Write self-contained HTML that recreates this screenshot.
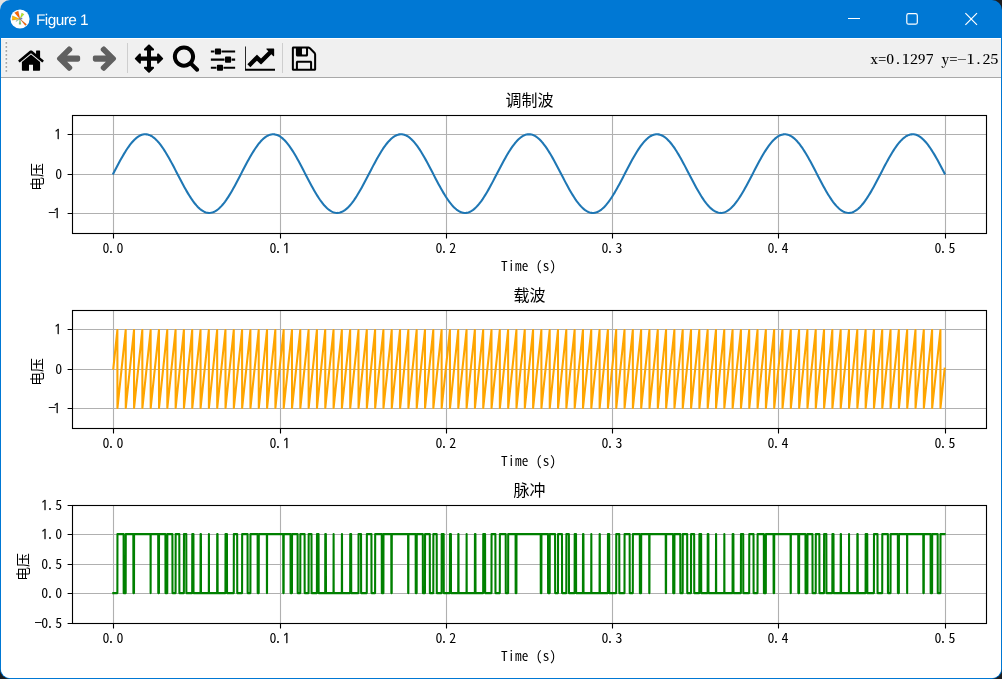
<!DOCTYPE html>
<html lang="zh-CN"><head><meta charset="utf-8"><title>Figure 1</title>
<style>
html,body{margin:0;padding:0;background:#1d1d1f;}
body{width:1002px;height:679px;overflow:hidden;position:relative;font-family:"Liberation Sans","Noto Sans CJK SC",sans-serif;}
#win{will-change:transform;position:absolute;left:0;top:0;width:1002px;height:679px;background:#0078d4;border-radius:10px;overflow:hidden;}
#cornertl{position:absolute;left:0;top:0;width:12px;height:12px;background:#e2e2e2;}
#title{font-family:"Liberation Sans",sans-serif;font-size:15.4px;letter-spacing:-.55px;text-rendering:geometricPrecision;fill:#fff;}
.logo{position:absolute;left:9px;top:8px;}
#ctl{position:absolute;left:0;top:0;}
#tbar{position:absolute;left:1px;top:38px;width:1000px;height:39px;background:#f0f0f0;border-bottom:1px solid #a9a9a9;box-shadow:inset 0 1px 0 #fff;}
.ic{position:absolute;overflow:hidden;}
#tbar .ic{margin-left:-1px;margin-top:-38px;}
.sep{position:absolute;top:5px;width:1px;height:30px;background:#cecece;}
#handle{position:absolute;left:-1px;top:0;}
#coordsvg{position:absolute;left:840px;top:0;}
#coord{font-family:"Noto Serif CJK SC","Liberation Serif",serif;font-feature-settings:"hwid";font-size:13.3px;font-weight:500;fill:#000;}
#canvas{position:absolute;left:1px;top:78px;width:1000px;height:600px;background:#fff;border-radius:0 0 9px 9px;overflow:hidden;}
.plot{position:absolute;left:0;top:0;display:block;}
.tk{font-family:"Noto Sans CJK SC","Liberation Sans",sans-serif;font-feature-settings:"hwid";font-size:13.9px;fill:#000;}
.xl{font-size:13.2px;letter-spacing:.34px;}
.o{font-family:"NanumGothic","Liberation Sans",sans-serif;font-feature-settings:normal;font-size:13.5px;text-rendering:geometricPrecision;stroke:#000;stroke-width:.32px;}
.tt{font-family:"Liberation Sans","Noto Sans CJK SC",sans-serif;font-size:16.0px;fill:#000;}
</style></head>
<body>
<div id="cornertl"></div>
<div id="win">
<svg class="logo" width="22" height="22" viewBox="-11 -11 22 22">
<circle r="9.6" fill="#fff"/>
<g stroke="#3a2a10" stroke-opacity=".45" stroke-width=".35" stroke-linejoin="round">
<polygon points="0,0 -5.4,-6.3 -1.8,-8.1" fill="#ff6200"/>
<polygon points="0,0 -7.6,-3.2 -7.8,1.2" fill="#ffb700"/>
<polygon points="0,0 1.7,-5.9 4,-4.7" fill="#b4f01e"/>
<polygon points="0,0 5.3,6.6 6.6,5.3" fill="#ff6200"/>
<polygon points="0,0 -1,5.3 0.9,5.3" fill="#5fe05f"/>
<polygon points="0,0 -4.1,2.7 -3.3,1.2" fill="#7fe8d8"/>
<polygon points="0,0 2.1,-1.1 2.1,0.2" fill="#4060ff"/>
</g>
</svg>
<svg id="ctl" width="1002" height="38" viewBox="0 0 1002 38">
<text id="title" x="36" y="24.95">Figure 1</text>
<g fill="none" stroke="#fff" stroke-width="1.2">
<path d="M848 18.5H860"/>
<rect x="906.8" y="13.7" width="10.5" height="10.5" rx="1.8"/>
<path d="M965.4 13.2L977 24.8M977 13.2L965.4 24.8"/>
</g>
</svg>
<div id="tbar">
<svg id="handle" width="10" height="36" viewBox="0 38 10 36"><g fill="#fff" opacity=".9"><rect x="4.6" y="41.5" width="2.4" height="2.4"/><rect x="4.6" y="45.5" width="2.4" height="2.4"/><rect x="4.6" y="49.5" width="2.4" height="2.4"/><rect x="4.6" y="53.5" width="2.4" height="2.4"/><rect x="4.6" y="57.5" width="2.4" height="2.4"/><rect x="4.6" y="61.5" width="2.4" height="2.4"/><rect x="4.6" y="65.5" width="2.4" height="2.4"/><rect x="4.6" y="69.5" width="2.4" height="2.4"/></g><g fill="#9a9a9a"><circle cx="6.3" cy="42.9" r="0.95"/><circle cx="6.3" cy="46.9" r="0.95"/><circle cx="6.3" cy="50.9" r="0.95"/><circle cx="6.3" cy="54.9" r="0.95"/><circle cx="6.3" cy="58.9" r="0.95"/><circle cx="6.3" cy="62.9" r="0.95"/><circle cx="6.3" cy="66.9" r="0.95"/><circle cx="6.3" cy="70.9" r="0.95"/></g></svg>
<svg class="ic" style="left:15.5px;top:43px" width="30" height="30" viewBox="0 0 72 72"><path d="M 57.86 45.94 C 57.86 45.87 57.86 45.79 57.82 45.72 L 35.99 27.73 L 14.18 45.72 C 14.18 45.79 14.14 45.87 14.14 45.94 L 14.14 64.15 C 14.14 65.48 15.24 66.58 16.57 66.58 L 31.14 66.58 L 31.14 52.02 L 40.86 52.02 L 40.86 66.58 L 55.43 66.58 C 56.76 66.58 57.86 65.48 57.86 64.15 z M 66.32 43.33 C 66.73 42.83 66.66 42.03 66.17 41.62 L 57.86 34.71 L 57.86 19.23 C 57.86 18.55 57.33 18.02 56.64 18.02 L 49.36 18.02 C 48.67 18.02 48.14 18.55 48.14 19.23 L 48.14 26.62 L 38.88 18.89 C 37.29 17.56 34.71 17.56 33.12 18.89 L 5.83 41.62 C 5.34 42.03 5.27 42.83 5.68 43.33 L 8.03 46.13 C 8.22 46.35 8.53 46.51 8.83 46.55 C 9.17 46.59 9.47 46.47 9.74 46.28 L 35.99 24.39 L 62.26 46.28 C 62.48 46.47 62.75 46.55 63.06 46.55 C 63.09 46.55 63.13 46.55 63.17 46.55 C 63.47 46.51 63.78 46.35 63.97 46.13 z" fill="#000"/></svg>
<svg class="ic" style="left:53px;top:43px" width="30" height="30" viewBox="0 0 72 72"><path d="M 65.14 35.01 C 65.14 32.42 63.43 30.15 60.7 30.15 L 33.99 30.15 L 45.11 19.04 C 46.02 18.12 46.55 16.87 46.55 15.58 C 46.55 14.29 46.02 13.03 45.11 12.13 L 42.26 9.32 C 41.34 8.41 40.13 7.88 38.85 7.88 C 37.55 7.88 36.3 8.41 35.39 9.32 L 10.69 33.99 C 9.82 34.9 9.29 36.14 9.29 37.44 C 9.29 38.73 9.82 39.98 10.69 40.85 L 35.39 65.6 C 36.3 66.47 37.55 67 38.85 67 C 40.13 67 41.39 66.47 42.26 65.6 L 45.11 62.71 C 46.02 61.84 46.55 60.58 46.55 59.3 C 46.55 58.01 46.02 56.76 45.11 55.88 L 33.99 44.73 L 60.7 44.73 C 63.43 44.73 65.14 42.44 65.14 39.86 z" fill="#606060"/></svg>
<svg class="ic" style="left:90px;top:43px" width="30" height="30" viewBox="0 0 72 72"><path d="M 62.71 37.44 C 62.71 36.14 62.22 34.9 61.31 34.02 L 36.61 9.32 C 35.69 8.41 34.44 7.88 33.15 7.88 C 31.87 7.88 30.64 8.41 29.74 9.32 L 26.89 12.16 C 25.98 13.03 25.45 14.29 25.45 15.58 C 25.45 16.87 25.98 18.12 26.89 19 L 38.01 30.15 L 11.3 30.15 C 8.57 30.15 6.86 32.42 6.86 35.01 L 6.86 39.86 C 6.86 42.44 8.57 44.73 11.3 44.73 L 38.01 44.73 L 26.89 55.84 C 25.98 56.76 25.45 58.01 25.45 59.3 C 25.45 60.58 25.98 61.84 26.89 62.75 L 29.74 65.6 C 30.64 66.47 31.87 67 33.15 67 C 34.44 67 35.69 66.47 36.61 65.6 L 61.31 40.89 C 62.22 39.98 62.71 38.73 62.71 37.44" fill="#606060"/></svg>
<svg class="ic" style="left:134px;top:43px" width="30" height="30" viewBox="0 0 72 72"><path d="M 70 37.44 C 70 36.8 69.73 36.19 69.28 35.74 L 59.57 26.02 C 59.11 25.56 58.5 25.3 57.86 25.3 C 56.53 25.3 55.43 26.4 55.43 27.73 L 55.43 32.58 L 40.86 32.58 L 40.86 18.02 L 45.71 18.02 C 47.04 18.02 48.14 16.91 48.14 15.58 C 48.14 14.94 47.88 14.33 47.42 13.87 L 37.71 4.16 C 37.25 3.71 36.65 3.44 36 3.44 C 35.35 3.44 34.75 3.71 34.29 4.16 L 24.58 13.87 C 24.12 14.33 23.86 14.94 23.86 15.58 C 23.86 16.91 24.96 18.02 26.29 18.02 L 31.14 18.02 L 31.14 32.58 L 16.57 32.58 L 16.57 27.73 C 16.57 26.4 15.47 25.3 14.14 25.3 C 13.5 25.3 12.89 25.56 12.43 26.02 L 2.72 35.74 C 2.27 36.19 2 36.8 2 37.44 C 2 38.09 2.27 38.69 2.72 39.15 L 12.43 48.86 C 12.89 49.32 13.5 49.58 14.14 49.58 C 15.47 49.58 16.57 48.49 16.57 47.16 L 16.57 42.3 L 31.14 42.3 L 31.14 56.87 L 26.29 56.87 C 24.96 56.87 23.86 57.97 23.86 59.3 C 23.86 59.94 24.12 60.55 24.58 61.01 L 34.29 70.72 C 34.75 71.17 35.35 71.44 36 71.44 C 36.65 71.44 37.25 71.17 37.71 70.72 L 47.42 61.01 C 47.88 60.55 48.14 59.94 48.14 59.3 C 48.14 57.97 47.04 56.87 45.71 56.87 L 40.86 56.87 L 40.86 42.3 L 55.43 42.3 L 55.43 47.16 C 55.43 48.49 56.53 49.58 57.86 49.58 C 58.5 49.58 59.11 49.32 59.57 48.86 L 69.28 39.15 C 69.73 38.69 70 38.09 70 37.44" fill="#000"/></svg>
<svg class="ic" style="left:171px;top:43px" width="30" height="30" viewBox="0 0 72 72"><path d="M 48.14 32.59 C 48.14 41.96 40.51 49.59 31.14 49.59 C 21.77 49.59 14.14 41.96 14.14 32.59 C 14.14 23.22 21.77 15.59 31.14 15.59 C 40.51 15.59 48.14 23.22 48.14 32.59 M 67.57 64.16 C 67.57 62.87 67.04 61.62 66.17 60.75 L 53.15 47.73 C 56.22 43.29 57.86 37.98 57.86 32.59 C 57.86 17.82 45.91 5.87 31.14 5.87 C 16.38 5.87 4.43 17.82 4.43 32.59 C 4.43 47.35 16.38 59.3 31.14 59.3 C 36.53 59.3 41.84 57.66 46.28 54.59 L 59.3 67.58 C 60.17 68.48 61.42 69.01 62.72 69.01 C 65.37 69.01 67.57 66.81 67.57 64.16" fill="#000"/></svg>
<svg class="ic" style="left:208px;top:43px" width="30" height="30" viewBox="0 0 72 72"><path d="M 20.21 56.87 L 6.86 56.87 L 6.86 61.73 L 20.21 61.73 z M 33.57 52.02 L 23.86 52.02 C 22.53 52.02 21.42 53.11 21.42 54.44 L 21.42 64.16 C 21.42 65.49 22.53 66.58 23.86 66.58 L 33.57 66.58 C 34.9 66.58 36 65.49 36 64.16 L 36 54.44 C 36 53.11 34.9 52.02 33.57 52.02 M 39.64 37.44 L 6.86 37.44 L 6.86 42.3 L 39.64 42.3 z M 15.36 18.02 L 6.86 18.02 L 6.86 22.87 L 15.36 22.87 z M 65.14 56.87 L 37.21 56.87 L 37.21 61.73 L 65.14 61.73 z M 28.71 13.16 L 19 13.16 C 17.67 13.16 16.57 14.26 16.57 15.58 L 16.57 25.3 C 16.57 26.62 17.67 27.73 19 27.73 L 28.71 27.73 C 30.04 27.73 31.14 26.62 31.14 25.3 L 31.14 15.58 C 31.14 14.26 30.04 13.16 28.71 13.16 M 53 32.58 L 43.29 32.58 C 41.96 32.58 40.86 33.69 40.86 35.02 L 40.86 44.73 C 40.86 46.06 41.96 47.16 43.29 47.16 L 53 47.16 C 54.33 47.16 55.42 46.06 55.42 44.73 L 55.42 35.02 C 55.42 33.69 54.33 32.58 53 32.58 M 65.14 37.44 L 56.64 37.44 L 56.64 42.3 L 65.14 42.3 z M 65.14 18.02 L 32.36 18.02 L 32.36 22.87 L 65.14 22.87 z" fill="#000"/></svg>
<svg class="ic" style="left:245px;top:43px" width="30" height="30" viewBox="0 0 72 72"><path d="M 74.86 61.73 L 2 61.73 L 2 8.3 L -2.86 8.3 L -2.86 66.58 L 74.86 66.58 z M 70 14.37 C 70 13.69 69.47 13.16 68.79 13.16 L 52.28 13.16 C 51.22 13.16 50.65 14.45 51.45 15.24 L 56.04 19.83 L 38.43 37.44 L 29.59 28.6 C 29.09 28.11 28.34 28.11 27.84 28.6 L 5.64 50.8 L 12.93 58.08 L 28.71 42.3 L 37.56 51.15 C 38.05 51.63 38.8 51.63 39.3 51.15 L 63.33 27.12 L 67.92 31.71 C 68.71 32.51 70 31.94 70 30.87 z" fill="#000"/></svg>
<svg class="ic" style="left:289px;top:43px" width="30" height="30" viewBox="0 0 72 72"><path d="M 21.42 61.73 L 21.42 47.16 L 50.57 47.16 L 50.57 61.73 z M 55.42 61.73 L 55.42 45.94 C 55.42 43.93 53.8 42.3 51.79 42.3 L 20.21 42.3 C 18.2 42.3 16.57 43.93 16.57 45.94 L 16.57 61.73 L 11.71 61.73 L 11.71 13.16 L 16.57 13.16 L 16.57 28.94 C 16.57 30.96 18.2 32.58 20.21 32.58 L 42.07 32.58 C 44.09 32.58 45.71 30.96 45.71 28.94 L 45.71 13.16 C 46.48 13.16 47.95 13.77 48.48 14.3 L 59.14 24.96 C 59.64 25.45 60.29 27.01 60.29 27.73 L 60.29 61.73 z M 40.86 26.52 C 40.86 27.16 40.28 27.73 39.64 27.73 L 32.36 27.73 C 31.71 27.73 31.14 27.16 31.14 26.52 L 31.14 14.37 C 31.14 13.72 31.71 13.16 32.36 13.16 L 39.64 13.16 C 40.28 13.16 40.86 13.72 40.86 14.37 z M 65.14 27.73 C 65.14 25.72 64.01 22.95 62.56 21.5 L 51.94 10.88 C 50.49 9.44 47.72 8.3 45.71 8.3 L 10.5 8.3 C 8.49 8.3 6.86 9.93 6.86 11.94 L 6.86 62.94 C 6.86 64.96 8.49 66.58 10.5 66.58 L 61.5 66.58 C 63.51 66.58 65.14 64.96 65.14 62.94 z" fill="#000"/></svg>
<div class="sep" style="left:126px"></div>
<div class="sep" style="left:281px"></div>
<svg id="coordsvg" width="160" height="39" viewBox="841 38 160 39"><text id="coord" transform="translate(998.3 63.55) scale(1.19 1)" text-anchor="end">x=0.1297 y=−1.25</text></svg>
</div>
<div id="canvas">
<svg class="plot" width="1000" height="600" viewBox="1 78 1000 600">
<rect x="1" y="78" width="1000" height="600" fill="#fff"/>
<g>
<path d="M113.5 115.5 V233.5 M280.5 115.5 V233.5 M446.5 115.5 V233.5 M612.5 115.5 V233.5 M778.5 115.5 V233.5 M945.5 115.5 V233.5 M72.5 134.5 H986.5 M72.5 174.5 H986.5 M72.5 213.5 H986.5" stroke="#b0b0b0" stroke-width="1.11" fill="none"/>
<clipPath id="c0"><rect x="72.5" y="115.5" width="914" height="118"/></clipPath>
<path clip-path="url(#c0)" d="M113.3 173.6 L114.49 171.31 L115.68 169.02 L116.86 166.75 L118.05 164.5 L119.24 162.29 L120.43 160.11 L121.61 157.98 L122.8 155.9 L123.99 153.88 L125.18 151.93 L126.36 150.06 L127.55 148.26 L128.74 146.55 L129.93 144.93 L131.11 143.41 L132.3 141.99 L133.49 140.68 L134.68 139.48 L135.87 138.4 L137.05 137.43 L138.24 136.6 L139.43 135.88 L140.62 135.3 L141.8 134.84 L142.99 134.52 L144.18 134.33 L145.37 134.27 L146.55 134.35 L147.74 134.56 L148.93 134.9 L150.12 135.38 L151.3 135.98 L152.49 136.72 L153.68 137.58 L154.87 138.56 L156.06 139.66 L157.24 140.87 L158.43 142.2 L159.62 143.64 L160.81 145.17 L161.99 146.81 L163.18 148.53 L164.37 150.34 L165.56 152.23 L166.74 154.19 L167.93 156.22 L169.12 158.3 L170.31 160.44 L171.49 162.63 L172.68 164.85 L173.87 167.1 L175.06 169.37 L176.25 171.66 L177.43 173.95 L178.62 176.25 L179.81 178.53 L181 180.8 L182.18 183.04 L183.37 185.25 L184.56 187.42 L185.75 189.54 L186.93 191.61 L188.12 193.62 L189.31 195.56 L190.5 197.43 L191.68 199.21 L192.87 200.91 L194.06 202.51 L195.25 204.02 L196.44 205.42 L197.62 206.71 L198.81 207.89 L200 208.96 L201.19 209.9 L202.37 210.72 L203.56 211.42 L204.75 211.98 L205.94 212.42 L207.12 212.72 L208.31 212.89 L209.5 212.93 L210.69 212.83 L211.87 212.6 L213.06 212.23 L214.25 211.74 L215.44 211.11 L216.62 210.36 L217.81 209.48 L219 208.48 L220.19 207.36 L221.38 206.13 L222.56 204.78 L223.75 203.33 L224.94 201.78 L226.13 200.13 L227.31 198.4 L228.5 196.57 L229.69 194.67 L230.88 192.7 L232.06 190.66 L233.25 188.57 L234.44 186.42 L235.63 184.23 L236.81 182.01 L238 179.75 L239.19 177.48 L240.38 175.19 L241.57 172.89 L242.75 170.6 L243.94 168.32 L245.13 166.06 L246.32 163.82 L247.5 161.61 L248.69 159.45 L249.88 157.33 L251.07 155.27 L252.25 153.28 L253.44 151.35 L254.63 149.49 L255.82 147.72 L257 146.04 L258.19 144.45 L259.38 142.96 L260.57 141.58 L261.76 140.3 L262.94 139.13 L264.13 138.09 L265.32 137.16 L266.51 136.36 L267.69 135.69 L268.88 135.14 L270.07 134.73 L271.26 134.44 L272.44 134.3 L273.63 134.28 L274.82 134.4 L276.01 134.65 L277.19 135.03 L278.38 135.55 L279.57 136.19 L280.76 136.97 L281.95 137.86 L283.13 138.88 L284.32 140.02 L285.51 141.27 L286.7 142.63 L287.88 144.1 L289.07 145.66 L290.26 147.33 L291.45 149.08 L292.63 150.91 L293.82 152.82 L295.01 154.81 L296.2 156.85 L297.38 158.96 L298.57 161.11 L299.76 163.31 L300.95 165.54 L302.14 167.8 L303.32 170.07 L304.51 172.36 L305.7 174.66 L306.89 176.95 L308.07 179.23 L309.26 181.49 L310.45 183.72 L311.64 185.92 L312.82 188.08 L314.01 190.19 L315.2 192.24 L316.39 194.23 L317.57 196.14 L318.76 197.98 L319.95 199.74 L321.14 201.41 L322.33 202.98 L323.51 204.46 L324.7 205.83 L325.89 207.09 L327.08 208.23 L328.26 209.26 L329.45 210.17 L330.64 210.95 L331.83 211.61 L333.01 212.13 L334.2 212.53 L335.39 212.79 L336.58 212.92 L337.76 212.91 L338.95 212.77 L340.14 212.5 L341.33 212.09 L342.52 211.56 L343.7 210.89 L344.89 210.1 L346.08 209.19 L347.27 208.15 L348.45 207 L349.64 205.73 L350.83 204.35 L352.02 202.87 L353.2 201.29 L354.39 199.61 L355.58 197.84 L356.77 196 L357.95 194.07 L359.14 192.08 L360.33 190.03 L361.52 187.91 L362.7 185.75 L363.89 183.55 L365.08 181.32 L366.27 179.05 L367.46 176.77 L368.64 174.48 L369.83 172.19 L371.02 169.9 L372.21 167.62 L373.39 165.37 L374.58 163.14 L375.77 160.94 L376.96 158.79 L378.14 156.69 L379.33 154.65 L380.52 152.68 L381.71 150.77 L382.89 148.94 L384.08 147.2 L385.27 145.54 L386.46 143.98 L387.65 142.52 L388.83 141.17 L390.02 139.93 L391.21 138.8 L392.4 137.79 L393.58 136.9 L394.77 136.14 L395.96 135.51 L397.15 135 L398.33 134.63 L399.52 134.38 L400.71 134.28 L401.9 134.3 L403.08 134.46 L404.27 134.75 L405.46 135.18 L406.65 135.73 L407.84 136.42 L409.02 137.23 L410.21 138.16 L411.4 139.22 L412.59 140.39 L413.77 141.68 L414.96 143.07 L416.15 144.57 L417.34 146.17 L418.52 147.86 L419.71 149.63 L420.9 151.49 L422.09 153.43 L423.27 155.43 L424.46 157.5 L425.65 159.62 L426.84 161.78 L428.03 163.99 L429.21 166.23 L430.4 168.5 L431.59 170.78 L432.78 173.07 L433.96 175.36 L435.15 177.65 L436.34 179.93 L437.53 182.18 L438.71 184.4 L439.9 186.59 L441.09 188.73 L442.28 190.82 L443.46 192.86 L444.65 194.82 L445.84 196.72 L447.03 198.53 L448.22 200.26 L449.4 201.91 L450.59 203.45 L451.78 204.89 L452.97 206.23 L454.15 207.45 L455.34 208.56 L456.53 209.55 L457.72 210.42 L458.9 211.17 L460.09 211.78 L461.28 212.27 L462.47 212.62 L463.65 212.84 L464.84 212.93 L466.03 212.88 L467.22 212.7 L468.41 212.39 L469.59 211.94 L470.78 211.37 L471.97 210.66 L473.16 209.83 L474.34 208.88 L475.53 207.81 L476.72 206.62 L477.91 205.31 L479.09 203.9 L480.28 202.39 L481.47 200.78 L482.66 199.08 L483.84 197.29 L485.03 195.41 L486.22 193.47 L487.41 191.46 L488.6 189.38 L489.78 187.25 L490.97 185.08 L492.16 182.87 L493.35 180.62 L494.53 178.35 L495.72 176.07 L496.91 173.78 L498.1 171.48 L499.28 169.2 L500.47 166.92 L501.66 164.68 L502.85 162.46 L504.03 160.28 L505.22 158.14 L506.41 156.06 L507.6 154.04 L508.79 152.08 L509.97 150.2 L511.16 148.39 L512.35 146.68 L513.54 145.05 L514.72 143.52 L515.91 142.1 L517.1 140.78 L518.29 139.57 L519.47 138.48 L520.66 137.5 L521.85 136.66 L523.04 135.93 L524.22 135.34 L525.41 134.87 L526.6 134.54 L527.79 134.34 L528.98 134.27 L530.16 134.34 L531.35 134.54 L532.54 134.87 L533.73 135.34 L534.91 135.93 L536.1 136.66 L537.29 137.5 L538.48 138.48 L539.66 139.57 L540.85 140.78 L542.04 142.1 L543.23 143.52 L544.41 145.05 L545.6 146.68 L546.79 148.39 L547.98 150.2 L549.16 152.08 L550.35 154.04 L551.54 156.06 L552.73 158.14 L553.92 160.28 L555.1 162.46 L556.29 164.68 L557.48 166.92 L558.67 169.2 L559.85 171.48 L561.04 173.78 L562.23 176.07 L563.42 178.35 L564.6 180.62 L565.79 182.87 L566.98 185.08 L568.17 187.25 L569.35 189.38 L570.54 191.46 L571.73 193.47 L572.92 195.41 L574.11 197.29 L575.29 199.08 L576.48 200.78 L577.67 202.39 L578.86 203.9 L580.04 205.31 L581.23 206.62 L582.42 207.81 L583.61 208.88 L584.79 209.83 L585.98 210.66 L587.17 211.37 L588.36 211.94 L589.54 212.39 L590.73 212.7 L591.92 212.88 L593.11 212.93 L594.3 212.84 L595.48 212.62 L596.67 212.27 L597.86 211.78 L599.05 211.17 L600.23 210.42 L601.42 209.55 L602.61 208.56 L603.8 207.45 L604.98 206.23 L606.17 204.89 L607.36 203.45 L608.55 201.91 L609.73 200.26 L610.92 198.53 L612.11 196.72 L613.3 194.82 L614.49 192.86 L615.67 190.82 L616.86 188.73 L618.05 186.59 L619.24 184.4 L620.42 182.18 L621.61 179.93 L622.8 177.65 L623.99 175.36 L625.17 173.07 L626.36 170.78 L627.55 168.5 L628.74 166.23 L629.92 163.99 L631.11 161.78 L632.3 159.62 L633.49 157.5 L634.68 155.43 L635.86 153.43 L637.05 151.49 L638.24 149.63 L639.43 147.86 L640.61 146.17 L641.8 144.57 L642.99 143.07 L644.18 141.68 L645.36 140.39 L646.55 139.22 L647.74 138.16 L648.93 137.23 L650.11 136.42 L651.3 135.73 L652.49 135.18 L653.68 134.75 L654.87 134.46 L656.05 134.3 L657.24 134.28 L658.43 134.38 L659.62 134.63 L660.8 135 L661.99 135.51 L663.18 136.14 L664.37 136.9 L665.55 137.79 L666.74 138.8 L667.93 139.93 L669.12 141.17 L670.3 142.52 L671.49 143.98 L672.68 145.54 L673.87 147.2 L675.06 148.94 L676.24 150.77 L677.43 152.68 L678.62 154.65 L679.81 156.69 L680.99 158.79 L682.18 160.94 L683.37 163.14 L684.56 165.37 L685.74 167.62 L686.93 169.9 L688.12 172.19 L689.31 174.48 L690.49 176.77 L691.68 179.05 L692.87 181.32 L694.06 183.55 L695.24 185.75 L696.43 187.91 L697.62 190.03 L698.81 192.08 L700 194.07 L701.18 196 L702.37 197.84 L703.56 199.61 L704.75 201.29 L705.93 202.87 L707.12 204.35 L708.31 205.73 L709.5 207 L710.68 208.15 L711.87 209.19 L713.06 210.1 L714.25 210.89 L715.43 211.56 L716.62 212.09 L717.81 212.5 L719 212.77 L720.19 212.91 L721.37 212.92 L722.56 212.79 L723.75 212.53 L724.94 212.13 L726.12 211.61 L727.31 210.95 L728.5 210.17 L729.69 209.26 L730.87 208.23 L732.06 207.09 L733.25 205.83 L734.44 204.46 L735.62 202.98 L736.81 201.41 L738 199.74 L739.19 197.98 L740.38 196.14 L741.56 194.23 L742.75 192.24 L743.94 190.19 L745.13 188.08 L746.31 185.92 L747.5 183.72 L748.69 181.49 L749.88 179.23 L751.06 176.95 L752.25 174.66 L753.44 172.36 L754.63 170.07 L755.81 167.8 L757 165.54 L758.19 163.31 L759.38 161.11 L760.57 158.96 L761.75 156.85 L762.94 154.81 L764.13 152.82 L765.32 150.91 L766.5 149.08 L767.69 147.33 L768.88 145.66 L770.07 144.1 L771.25 142.63 L772.44 141.27 L773.63 140.02 L774.82 138.88 L776 137.86 L777.19 136.97 L778.38 136.19 L779.57 135.55 L780.76 135.03 L781.94 134.65 L783.13 134.4 L784.32 134.28 L785.51 134.3 L786.69 134.44 L787.88 134.73 L789.07 135.14 L790.26 135.69 L791.44 136.36 L792.63 137.16 L793.82 138.09 L795.01 139.13 L796.19 140.3 L797.38 141.58 L798.57 142.96 L799.76 144.45 L800.95 146.04 L802.13 147.72 L803.32 149.49 L804.51 151.35 L805.7 153.28 L806.88 155.27 L808.07 157.33 L809.26 159.45 L810.45 161.61 L811.63 163.82 L812.82 166.06 L814.01 168.32 L815.2 170.6 L816.38 172.89 L817.57 175.19 L818.76 177.48 L819.95 179.75 L821.14 182.01 L822.32 184.23 L823.51 186.42 L824.7 188.57 L825.89 190.66 L827.07 192.7 L828.26 194.67 L829.45 196.57 L830.64 198.4 L831.82 200.13 L833.01 201.78 L834.2 203.33 L835.39 204.78 L836.57 206.13 L837.76 207.36 L838.95 208.48 L840.14 209.48 L841.33 210.36 L842.51 211.11 L843.7 211.74 L844.89 212.23 L846.08 212.6 L847.26 212.83 L848.45 212.93 L849.64 212.89 L850.83 212.72 L852.01 212.42 L853.2 211.98 L854.39 211.42 L855.58 210.72 L856.76 209.9 L857.95 208.96 L859.14 207.89 L860.33 206.71 L861.51 205.42 L862.7 204.02 L863.89 202.51 L865.08 200.91 L866.27 199.21 L867.45 197.43 L868.64 195.56 L869.83 193.62 L871.02 191.61 L872.2 189.54 L873.39 187.42 L874.58 185.25 L875.77 183.04 L876.95 180.8 L878.14 178.53 L879.33 176.25 L880.52 173.95 L881.7 171.66 L882.89 169.37 L884.08 167.1 L885.27 164.85 L886.46 162.63 L887.64 160.44 L888.83 158.3 L890.02 156.22 L891.21 154.19 L892.39 152.23 L893.58 150.34 L894.77 148.53 L895.96 146.81 L897.14 145.17 L898.33 143.64 L899.52 142.2 L900.71 140.87 L901.89 139.66 L903.08 138.56 L904.27 137.58 L905.46 136.72 L906.65 135.98 L907.83 135.38 L909.02 134.9 L910.21 134.56 L911.4 134.35 L912.58 134.27 L913.77 134.33 L914.96 134.52 L916.15 134.84 L917.33 135.3 L918.52 135.88 L919.71 136.6 L920.9 137.43 L922.08 138.4 L923.27 139.48 L924.46 140.68 L925.65 141.99 L926.84 143.41 L928.02 144.93 L929.21 146.55 L930.4 148.26 L931.59 150.06 L932.77 151.93 L933.96 153.88 L935.15 155.9 L936.34 157.98 L937.52 160.11 L938.71 162.29 L939.9 164.5 L941.09 166.75 L942.27 169.02 L943.46 171.31 L944.65 173.6" stroke="#1f77b4" stroke-width="2.08" fill="none" stroke-linejoin="round" stroke-linecap="square"/>
<path d="M113.5 233.5 v4.9 M280.5 233.5 v4.9 M446.5 233.5 v4.9 M612.5 233.5 v4.9 M778.5 233.5 v4.9 M945.5 233.5 v4.9 M72.5 134.5 h-4.9 M72.5 174.5 h-4.9 M72.5 213.5 h-4.9" stroke="#000" stroke-width="1.11" fill="none"/>
<rect x="72.5" y="115.5" width="914" height="118" fill="none" stroke="#000" stroke-width="1.11"/>
<text class="tk" x="102.48 107.53 116.38" y="252.9">0.0</text>
<text class="tk" x="269.47 274.52 282.18" y="252.9">0.<tspan class="o">1</tspan></text>
<text class="tk" x="435.47 440.52 449.37" y="252.9">0.2</text>
<text class="tk" x="601.48 606.53 615.38" y="252.9">0.3</text>
<text class="tk" x="767.48 772.53 781.38" y="252.9">0.4</text>
<text class="tk" x="934.48 939.53 948.38" y="252.9">0.5</text>
<text class="tk" x="53.85" y="139.05"><tspan class="o">1</tspan></text>
<text class="tk" x="55.25" y="179.05">0</text>
<text class="tk" x="48.3 52.85" y="218.05">−<tspan class="o">1</tspan></text>
<text class="tk xl" x="528.8" y="270.8" text-anchor="middle">Time (s)</text>
<text class="tt" x="529.5" y="106" text-anchor="middle">调制波</text>
<text class="tk" transform="translate(42.4 176.9) rotate(-90)" text-anchor="middle">电压</text>
</g>
<g>
<path d="M113.5 310.5 V428.5 M280.5 310.5 V428.5 M446.5 310.5 V428.5 M612.5 310.5 V428.5 M778.5 310.5 V428.5 M945.5 310.5 V428.5 M72.5 329.5 H986.5 M72.5 369.5 H986.5 M72.5 408.5 H986.5" stroke="#b0b0b0" stroke-width="1.11" fill="none"/>
<clipPath id="c1"><rect x="72.5" y="310.5" width="914" height="118"/></clipPath>
<path clip-path="url(#c1)" d="M113.3 368.6 L117.37 330.06 L117.46 407.93 L125.69 330.06 L125.77 407.93 L134 330.06 L134.08 407.93 L142.31 330.06 L142.4 407.93 L150.63 330.06 L150.71 407.93 L158.94 330.06 L159.02 407.93 L167.25 330.06 L167.34 407.93 L175.57 330.06 L175.65 407.93 L183.88 330.06 L183.96 407.93 L192.2 330.06 L192.28 407.93 L200.51 330.06 L200.59 407.93 L208.82 330.06 L208.91 407.93 L217.14 330.06 L217.22 407.93 L225.45 330.06 L225.53 407.93 L233.76 330.06 L233.85 407.93 L242.08 330.06 L242.16 407.93 L250.39 330.06 L250.47 407.93 L258.7 330.06 L258.79 407.93 L267.02 330.06 L267.1 407.93 L275.33 330.06 L275.41 407.93 L283.64 330.06 L283.73 407.93 L291.96 330.06 L292.04 407.93 L300.27 330.06 L300.35 407.93 L308.58 330.06 L308.67 407.93 L316.9 330.06 L316.98 407.93 L325.21 330.06 L325.29 407.93 L333.52 330.06 L333.61 407.93 L341.84 330.06 L341.92 407.93 L350.15 330.06 L350.23 407.93 L358.47 330.06 L358.55 407.93 L366.78 330.06 L366.86 407.93 L375.09 330.06 L375.18 407.93 L383.41 330.06 L383.49 407.93 L391.72 330.06 L391.8 407.93 L400.03 330.06 L400.12 407.93 L408.35 330.06 L408.43 407.93 L416.66 330.06 L416.74 407.93 L424.97 330.06 L425.06 407.93 L433.29 330.06 L433.37 407.93 L441.6 330.06 L441.68 407.93 L449.91 330.06 L450 407.93 L458.23 330.06 L458.31 407.93 L466.54 330.06 L466.62 407.93 L474.85 330.06 L474.94 407.93 L483.17 330.06 L483.25 407.93 L491.48 330.06 L491.56 407.93 L499.79 330.06 L499.88 407.93 L508.11 330.06 L508.19 407.93 L516.42 330.06 L516.5 407.93 L524.74 330.06 L524.82 407.93 L533.05 330.06 L533.13 407.93 L541.36 330.06 L541.45 407.93 L549.68 330.06 L549.76 407.93 L557.99 330.06 L558.07 407.93 L566.3 330.06 L566.39 407.93 L574.62 330.06 L574.7 407.93 L582.93 330.06 L583.01 407.93 L591.24 330.06 L591.33 407.93 L599.56 330.06 L599.64 407.93 L607.87 330.06 L607.95 407.93 L616.18 330.06 L616.27 407.93 L624.5 330.06 L624.58 407.93 L632.81 330.06 L632.89 407.93 L641.12 330.06 L641.21 407.93 L649.44 330.06 L649.52 407.93 L657.75 330.06 L657.83 407.93 L666.06 330.06 L666.15 407.93 L674.38 330.06 L674.46 407.93 L682.69 330.06 L682.77 407.93 L691.01 330.06 L691.09 407.93 L699.32 330.06 L699.4 407.93 L707.63 330.06 L707.72 407.93 L715.95 330.06 L716.03 407.93 L724.26 330.06 L724.34 407.93 L732.57 330.06 L732.66 407.93 L740.89 330.06 L740.97 407.93 L749.2 330.06 L749.28 407.93 L757.51 330.06 L757.6 407.93 L765.83 330.06 L765.91 407.93 L774.14 330.06 L774.22 407.93 L782.45 330.06 L782.54 407.93 L790.77 330.06 L790.85 407.93 L799.08 330.06 L799.16 407.93 L807.39 330.06 L807.48 407.93 L815.71 330.06 L815.79 407.93 L824.02 330.06 L824.1 407.93 L832.33 330.06 L832.42 407.93 L840.65 330.06 L840.73 407.93 L848.96 330.06 L849.04 407.93 L857.28 330.06 L857.36 407.93 L865.59 330.06 L865.67 407.93 L873.9 330.06 L873.99 407.93 L882.22 330.06 L882.3 407.93 L890.53 330.06 L890.61 407.93 L898.84 330.06 L898.93 407.93 L907.16 330.06 L907.24 407.93 L915.47 330.06 L915.55 407.93 L923.78 330.06 L923.87 407.93 L932.1 330.06 L932.18 407.93 L940.41 330.06 L940.49 407.93 L944.65 368.6" stroke="#ffa500" stroke-width="2.08" fill="none" stroke-linejoin="round" stroke-linecap="square"/>
<path d="M113.5 428.5 v4.9 M280.5 428.5 v4.9 M446.5 428.5 v4.9 M612.5 428.5 v4.9 M778.5 428.5 v4.9 M945.5 428.5 v4.9 M72.5 329.5 h-4.9 M72.5 369.5 h-4.9 M72.5 408.5 h-4.9" stroke="#000" stroke-width="1.11" fill="none"/>
<rect x="72.5" y="310.5" width="914" height="118" fill="none" stroke="#000" stroke-width="1.11"/>
<text class="tk" x="102.48 107.53 116.38" y="447.9">0.0</text>
<text class="tk" x="269.47 274.52 282.18" y="447.9">0.<tspan class="o">1</tspan></text>
<text class="tk" x="435.47 440.52 449.37" y="447.9">0.2</text>
<text class="tk" x="601.48 606.53 615.38" y="447.9">0.3</text>
<text class="tk" x="767.48 772.53 781.38" y="447.9">0.4</text>
<text class="tk" x="934.48 939.53 948.38" y="447.9">0.5</text>
<text class="tk" x="53.85" y="334.05"><tspan class="o">1</tspan></text>
<text class="tk" x="55.25" y="374.05">0</text>
<text class="tk" x="48.3 52.85" y="413.05">−<tspan class="o">1</tspan></text>
<text class="tk xl" x="528.8" y="465.8" text-anchor="middle">Time (s)</text>
<text class="tt" x="529.5" y="301" text-anchor="middle">载波</text>
<text class="tk" transform="translate(42.4 371.9) rotate(-90)" text-anchor="middle">电压</text>
</g>
<g>
<path d="M113.5 505.5 V623.5 M280.5 505.5 V623.5 M446.5 505.5 V623.5 M612.5 505.5 V623.5 M778.5 505.5 V623.5 M945.5 505.5 V623.5 M72.5 534.5 H986.5 M72.5 564.5 H986.5 M72.5 593.5 H986.5" stroke="#b0b0b0" stroke-width="1.11" fill="none"/>
<clipPath id="c2"><rect x="72.5" y="505.5" width="914" height="118"/></clipPath>
<path clip-path="url(#c2)" d="M113.3 593.1 L117.37 593.1 L117.46 534.1 L123.61 534.1 L123.69 593.1 L125.69 593.1 L125.77 534.1 L133.34 534.1 L133.42 593.1 L134 593.1 L134.08 534.1 L150.54 534.1 L150.63 593.1 L150.63 593.1 L150.71 534.1 L158.19 534.1 L158.28 593.1 L158.94 593.1 L159.02 534.1 L165.43 534.1 L165.51 593.1 L167.25 593.1 L167.34 534.1 L172.41 534.1 L172.49 593.1 L175.57 593.1 L175.65 534.1 L179.31 534.1 L179.39 593.1 L183.88 593.1 L183.96 534.1 L186.29 534.1 L186.38 593.1 L192.2 593.1 L192.28 534.1 L193.44 534.1 L193.53 593.1 L200.51 593.1 L200.59 534.1 L200.92 534.1 L201.01 593.1 L208.82 593.1 L208.91 534.1 L208.91 534.1 L208.99 593.1 L217.14 593.1 L217.22 534.1 L217.55 534.1 L217.63 593.1 L225.45 593.1 L225.53 534.1 L226.95 534.1 L227.03 593.1 L233.76 593.1 L233.85 534.1 L237.17 534.1 L237.25 593.1 L242.08 593.1 L242.16 534.1 L247.56 534.1 L247.65 593.1 L250.39 593.1 L250.47 534.1 L257.62 534.1 L257.71 593.1 L258.7 593.1 L258.79 534.1 L266.85 534.1 L266.93 593.1 L267.02 593.1 L267.1 534.1 L283.23 534.1 L283.31 593.1 L283.64 593.1 L283.73 534.1 L290.54 534.1 L290.63 593.1 L291.96 593.1 L292.04 534.1 L297.61 534.1 L297.69 593.1 L300.27 593.1 L300.35 534.1 L304.59 534.1 L304.68 593.1 L308.58 593.1 L308.67 534.1 L311.49 534.1 L311.58 593.1 L316.9 593.1 L316.98 534.1 L318.56 534.1 L318.64 593.1 L325.21 593.1 L325.29 534.1 L325.88 534.1 L325.96 593.1 L333.52 593.1 L333.61 534.1 L333.61 534.1 L333.69 593.1 L341.84 593.1 L341.92 534.1 L342 534.1 L342.09 593.1 L350.15 593.1 L350.23 534.1 L351.15 534.1 L351.23 593.1 L358.47 593.1 L358.55 534.1 L361.04 534.1 L361.13 593.1 L366.78 593.1 L366.86 534.1 L371.43 534.1 L371.52 593.1 L375.09 593.1 L375.18 534.1 L381.74 534.1 L381.83 593.1 L383.41 593.1 L383.49 534.1 L391.3 534.1 L391.39 593.1 L391.72 593.1 L391.8 534.1 L408.1 534.1 L408.18 593.1 L408.35 593.1 L408.43 534.1 L415.66 534.1 L415.75 593.1 L416.66 593.1 L416.74 534.1 L422.81 534.1 L422.89 593.1 L424.97 593.1 L425.06 534.1 L429.79 534.1 L429.88 593.1 L433.29 593.1 L433.37 534.1 L436.7 534.1 L436.78 593.1 L441.6 593.1 L441.68 534.1 L443.68 534.1 L443.76 593.1 L449.91 593.1 L450 534.1 L450.91 534.1 L450.99 593.1 L458.23 593.1 L458.31 534.1 L458.48 534.1 L458.56 593.1 L466.54 593.1 L466.62 534.1 L466.62 534.1 L466.71 593.1 L474.85 593.1 L474.94 534.1 L475.44 534.1 L475.52 593.1 L483.17 593.1 L483.25 534.1 L485.08 534.1 L485.16 593.1 L491.48 593.1 L491.56 534.1 L495.39 534.1 L495.47 593.1 L499.79 593.1 L499.88 534.1 L505.7 534.1 L505.78 593.1 L508.11 593.1 L508.19 534.1 L515.59 534.1 L515.67 593.1 L516.42 593.1 L516.5 534.1 L540.7 534.1 L540.78 593.1 L541.36 593.1 L541.45 534.1 L548.01 534.1 L548.1 593.1 L549.68 593.1 L549.76 534.1 L555.08 534.1 L555.16 593.1 L557.99 593.1 L558.07 534.1 L561.98 534.1 L562.06 593.1 L566.3 593.1 L566.39 534.1 L568.88 534.1 L568.96 593.1 L574.62 593.1 L574.7 534.1 L576.03 534.1 L576.11 593.1 L582.93 593.1 L583.01 534.1 L583.43 534.1 L583.51 593.1 L591.24 593.1 L591.33 534.1 L591.33 534.1 L591.41 593.1 L599.56 593.1 L599.64 534.1 L599.81 534.1 L599.89 593.1 L607.87 593.1 L607.95 534.1 L609.2 534.1 L609.28 593.1 L616.18 593.1 L616.27 534.1 L619.26 534.1 L619.34 593.1 L624.5 593.1 L624.58 534.1 L629.65 534.1 L629.73 593.1 L632.81 593.1 L632.89 534.1 L639.79 534.1 L639.88 593.1 L641.12 593.1 L641.21 534.1 L649.19 534.1 L649.27 593.1 L649.44 593.1 L649.52 534.1 L665.73 534.1 L665.82 593.1 L666.06 593.1 L666.15 534.1 L673.13 534.1 L673.21 593.1 L674.38 593.1 L674.46 534.1 L680.28 534.1 L680.36 593.1 L682.69 593.1 L682.77 534.1 L687.18 534.1 L687.26 593.1 L691.01 593.1 L691.09 534.1 L694.16 534.1 L694.25 593.1 L699.32 593.1 L699.4 534.1 L701.15 534.1 L701.23 593.1 L707.63 593.1 L707.72 534.1 L708.38 534.1 L708.46 593.1 L715.95 593.1 L716.03 534.1 L716.11 534.1 L716.2 593.1 L724.26 593.1 L724.34 534.1 L724.34 534.1 L724.43 593.1 L732.57 593.1 L732.66 534.1 L733.4 534.1 L733.49 593.1 L740.89 593.1 L740.97 534.1 L743.21 534.1 L743.3 593.1 L749.2 593.1 L749.28 534.1 L753.52 534.1 L753.61 593.1 L757.51 593.1 L757.6 534.1 L763.83 534.1 L763.91 593.1 L765.83 593.1 L765.91 534.1 L773.56 534.1 L773.64 593.1 L774.14 593.1 L774.22 534.1 L790.6 534.1 L790.68 593.1 L790.77 593.1 L790.85 534.1 L798.25 534.1 L798.33 593.1 L799.08 593.1 L799.16 534.1 L805.48 534.1 L805.57 593.1 L807.39 593.1 L807.48 534.1 L812.47 534.1 L812.55 593.1 L815.71 593.1 L815.79 534.1 L819.37 534.1 L819.45 593.1 L824.02 593.1 L824.1 534.1 L826.35 534.1 L826.43 593.1 L832.33 593.1 L832.42 534.1 L833.5 534.1 L833.58 593.1 L840.65 593.1 L840.73 534.1 L840.98 534.1 L841.06 593.1 L848.96 593.1 L849.04 534.1 L849.04 534.1 L849.13 593.1 L857.28 593.1 L857.36 534.1 L857.69 534.1 L857.77 593.1 L865.59 593.1 L865.67 534.1 L867.25 534.1 L867.33 593.1 L873.9 593.1 L873.99 534.1 L877.48 534.1 L877.56 593.1 L882.22 593.1 L882.3 534.1 L887.87 534.1 L887.95 593.1 L890.53 593.1 L890.61 534.1 L897.84 534.1 L897.93 593.1 L898.84 593.1 L898.93 534.1 L907.07 534.1 L907.16 593.1 L907.16 593.1 L907.24 534.1 L923.28 534.1 L923.37 593.1 L923.78 593.1 L923.87 534.1 L930.6 534.1 L930.68 593.1 L932.1 593.1 L932.18 534.1 L937.67 534.1 L937.75 593.1 L940.41 593.1 L940.49 534.1 L944.57 534.1" stroke="#008000" stroke-width="2.08" fill="none" stroke-linejoin="round" stroke-linecap="square"/>
<path d="M113.5 623.5 v4.9 M280.5 623.5 v4.9 M446.5 623.5 v4.9 M612.5 623.5 v4.9 M778.5 623.5 v4.9 M945.5 623.5 v4.9 M72.5 505.5 h-4.9 M72.5 534.5 h-4.9 M72.5 564.5 h-4.9 M72.5 593.5 h-4.9 M72.5 623.5 h-4.9" stroke="#000" stroke-width="1.11" fill="none"/>
<rect x="72.5" y="505.5" width="914" height="118" fill="none" stroke="#000" stroke-width="1.11"/>
<text class="tk" x="102.48 107.53 116.38" y="642.9">0.0</text>
<text class="tk" x="269.47 274.52 282.18" y="642.9">0.<tspan class="o">1</tspan></text>
<text class="tk" x="435.47 440.52 449.37" y="642.9">0.2</text>
<text class="tk" x="601.48 606.53 615.38" y="642.9">0.3</text>
<text class="tk" x="767.48 772.53 781.38" y="642.9">0.4</text>
<text class="tk" x="934.48 939.53 948.38" y="642.9">0.5</text>
<text class="tk" x="40.49 46.4 55.25" y="510.05"><tspan class="o">1</tspan>.5</text>
<text class="tk" x="40.49 46.4 55.25" y="539.05"><tspan class="o">1</tspan>.0</text>
<text class="tk" x="41.35 46.4 55.25" y="569.05">0.5</text>
<text class="tk" x="41.35 46.4 55.25" y="598.05">0.0</text>
<text class="tk" x="34.4 41.35 46.4 55.25" y="628.05">−0.5</text>
<text class="tk xl" x="528.8" y="660.8" text-anchor="middle">Time (s)</text>
<text class="tt" x="529.5" y="496" text-anchor="middle">脉冲</text>
<text class="tk" transform="translate(28.4 566.9) rotate(-90)" text-anchor="middle">电压</text>
</g>
</svg>
</div>
</div>
</body></html>
